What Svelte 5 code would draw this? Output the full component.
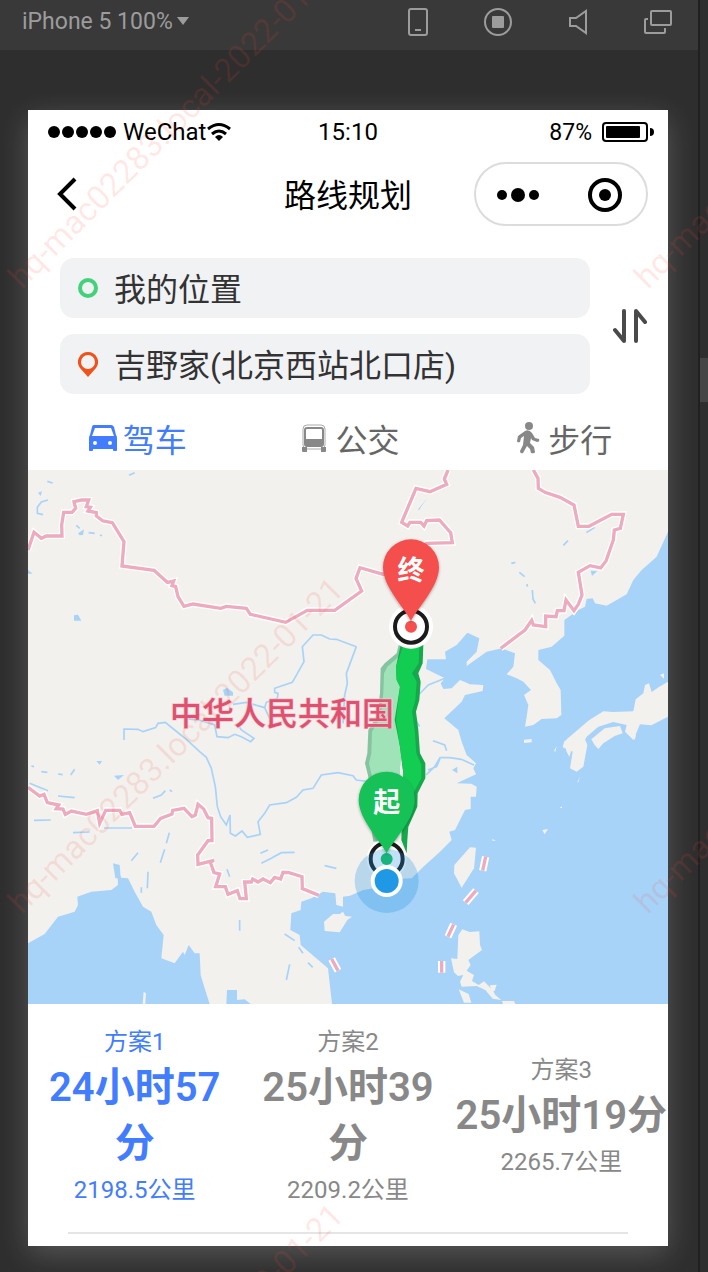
<script lang="ts">
  interface Plan {
    name: string;
    time: string;
    distance: string;
  }

  const plans: Plan[] = [
    { name: "方案1", time: "24小时57\n分", distance: "2198.5公里" },
    { name: "方案2", time: "25小时39\n分", distance: "2209.2公里" },
    { name: "方案3", time: "25小时19分", distance: "2265.7公里" },
  ];

  const modes = [
    { id: "car", label: "驾车" },
    { id: "bus", label: "公交" },
    { id: "walk", label: "步行" },
  ];

  // map units: 1920 x 1602
  const borders = [
    "M0 240 18 187 40 205 55 198 102 198 101 165 107 127 132 127 143 115 138 95 160 90 182 90 175 110 187 112 180 123 205 128 205 138 225 153 253 158 288 215 282 288 378 301 418 337 437 333 432 347 443 350 450 380 468 409 495 402 578 415 595 409 655 415 667 433 773 457 838 421 920 421 1001 363 984 325 996 293 1066 313 1196 220 1273 218 1268 188 1234 150 1196 152 1188 168 1178 157 1146 157 1139 168 1121 157 1164 55 1206 65 1256 43 1249 27 1260 0",
    "M1516 0 1530 25 1531 55 1551 67 1596 82 1638 105 1651 169 1683 169 1751 133 1786 133 1777 175 1759 180 1756 210 1734 273 1718 294 1686 287 1651 307 1662 375 1651 403 1638 422 1614 390 1608 422 1588 422 1584 440 1553 438 1553 470 1516 465 1511 451 1491 480 1418 535",
    "M0 952 35 978 48 973 58 998 92 1005 85 1016 105 1017 112 1033 130 1023 175 1033 208 1022 215 1060 233 1021 275 1021 282 1033 305 1028 322 1069 378 1069 398 1045 432 1032 434 1021 468 1015 492 1040 502 1035 510 1003 527 1017 540 1043 551 1045 552 1112 540 1112 509 1155 510 1183 558 1171 547 1177 558 1208 575 1212 563 1250 592 1250 600 1273 628 1262 636 1286 655 1286 650 1236 670 1236 674 1227 690 1236 705 1227 727 1238 740 1222 758 1227 765 1207 783 1208 822 1220 823 1256 873 1276",
  ];

  const dashes = [
    "M1373 1160 1364 1202",
    "M1344 1262 1313 1298",
    "M1277 1363 1260 1400",
    "M1241 1473V1508",
    "M911 1467 930 1502",
  ];

  const land = [
    "M888 1355 915 1332 935 1332 945 1325 952 1338 972 1340 958 1350 935 1387 890 1383Z",
    "M1326 1132 1344 1133 1338 1195 1301 1253 1278 1210 1279 1185Z",
    "M1291 1395 1303 1378 1325 1386 1354 1384 1356 1425 1362 1440 1321 1470 1328 1485 1316 1502 1338 1515 1332 1533 1352 1545 1368 1534 1394 1560 1402 1575 1420 1590 1394 1586 1372 1560 1346 1548 1301 1550 1296 1535 1306 1515 1290 1518 1278 1507 1269 1465 1288 1467Z",
    "M1292 1558 1322 1572 1330 1598 1308 1598Z",
    "M1422 1593H1458L1462 1602H1425Z",
    "M1386 1546 1406 1544 1400 1562 1390 1566Z",
    "M1920 635 1894 650 1871 666 1863 640 1851 645 1846 670 1823 688 1816 724 1755 726 1726 724 1684 750 1616 808 1606 835 1660 828 1676 800 1711 770 1756 756 1796 765 1791 785 1816 810 1836 763 1870 766 1920 740Z",
    "M1610 812 1666 795 1678 825 1666 890 1646 905 1626 895 1634 845 1604 830Z",
    "M1690 808 1730 775 1776 768 1784 790 1760 798 1726 820 1711 837 1700 825Z",
    "M1806 790 1824 795 1820 810Z",
    "M1488 809 1511 807 1511 817 1488 819Z",
    "M1543 1080 1560 1077 1550 1093Z",
    "M1597 1010H1602V1014H1597Z",
    "M1393 1107 1404 1112H1393Z",
    "M1647 938 1656 920 1652 934Z",
    "M1896 615 1908 610V626Z",
    "M1578 842 1586 828 1582 845Z",
    "M1610 825 1632 835 1624 860 1616 845Z",
    "M344 1602 347 1565 354 1570 352 1602Z",
  ];

  const rivers = [
    "M288 810V777L330 778 345 785 383 773 390 760 412 757 440 780 475 808 515 845 535 862 550 895 562 950 568 1010 578 1040 595 1065 606 1035 607 1090 622 1098 642 1083 658 1102 697 1093 690 1055 710 1030 725 1005 775 998 805 982 825 960 855 955 880 915 930 908 975 917 985 930 1040 937",
    "M1171 675 1201 645 1251 625",
    "M1194 915 1220 890 1236 863 1266 863 1300 868 1338 885M1200 900 1226 890 1236 866",
    "M985 530 955 610 958 640 950 675 945 760",
    "M985 530 925 508 905 507 880 495 855 495 823 530 828 575 793 637 740 655 740 667 750 670 748 685 715 697 710 713 655 697 615 703M710 713 725 745",
    "M470 745 520 752 560 765 567 800 600 803 620 793 640 800 668 815 678 805 640 780 630 765",
    "M303 16 320 8M58 34 74 39M60 90 40 96 28 112 28 130 45 134M145 166 155 175M182 188 200 190M216 195 222 197",
    "M1606 226 1620 212M1675 188 1700 172M1450 280 1462 277M1474 307 1490 320M1497 342 1498 350M1513 360 1515 387 1522 400",
    "M90 978 140 983M18 1051 68 1050M135 1088 185 1086M228 1074 312 1074M375 985 400 975 412 962M425 960 432 965M310 1172 330 1148M397 1178 410 1138M415 1120 424 1088M360 1205 358 1255M340 1252V1268",
    "M700 1180 730 1165 760 1148 800 1147M697 1150 720 1140M890 1187 925 1195M597 1198 605 1220M635 1350V1382M770 1392 800 1412M812 1432 825 1450M840 1478 854 1492M785 1483 775 1530M10 888 18 890M40 905 58 907M90 912 104 914M128 915 140 898M5 940 60 962",
    "M1215 812 1250 825 1256 842M1160 745 1175 770",
  ];
  const lakes = [
    "M138 436 150 434 160 452H138Z",
    "M150 190 168 178 165 195 155 196Z",
    "M1170 118 1198 85 1178 112 1174 120Z",
    "M1688 302 1708 303 1692 318Z",
    "M585 660 597 653 615 667V677H590Z",
    "M258 917 288 915 270 930Z",
    "M205 873 222 873 215 884Z",
    "M1272 900 1288 890V910Z",
    "M0 300 14 311H0Z",
    "M255 1180 275 1185 278 1225 262 1225Z",
    "M30 68 42 64 38 78Z",
  ];

  let from = $state("我的位置");
  let to = $state("吉野家(北京西站北口店)");
  let mode = $state("car");
  let selected = $state(0);

  function swap() {
    [from, to] = [to, from];
  }
</script>

{#snippet pin(x: number, y: number, color: string, label: string)}
  <g transform="translate({x} {y})">
    <path
      d="M0 0C-12-32-84-100-84-162A84 84 0 0 1 84-162C84-100 12-32 0 0Z"
      fill={color}
      filter="url(#pin-shadow)"
    />
    <text class="pin-label" y="-124">{label}</text>
  </g>
{/snippet}

<div class="simulator">
  <div class="workspace">
    <div class="toolbar">
      <button class="device">iPhone 5 100% <span class="caret"></span></button>
      <div class="tools">
        <button aria-label="Device">
          <svg width="28" height="28" viewBox="0 0 28 28"><rect x="5" y="1" width="18" height="26" rx="2" /><path d="M11 22H17" /></svg>
        </button>
        <button aria-label="Stop">
          <svg width="28" height="28" viewBox="0 0 28 28"><circle cx="14" cy="14" r="13" /><rect class="solid" x="8" y="8" width="12" height="12" rx="1" /></svg>
        </button>
        <button aria-label="Sound">
          <svg width="28" height="28" viewBox="0 0 28 28"><path d="M6 10H12L22 3V25L12 18H6Z" /></svg>
        </button>
        <button aria-label="Windows">
          <svg width="28" height="28" viewBox="0 0 28 28"><rect x="7" y="3" width="20" height="14" rx="1" /><path d="M4 11H2Q1 11 1 12V24Q1 25 2 25H20Q21 25 21 24V20" /></svg>
        </button>
      </div>
    </div>

    <main class="phone">
      <div class="status">
        <div class="carrier">
          <svg width="70" height="14" viewBox="0 0 70 14">
            {#each [6, 20, 34, 48, 62] as cx}
              <circle {cx} cy="7" r="6" />
            {/each}
          </svg>
          <span>WeChat</span>
          <svg width="24" height="20" viewBox="0 0 24 20">
            <g fill="none" stroke="#000" stroke-width="3">
              <path d="M1 7Q12-2 23 7" />
              <path d="M5 12Q12 6 19 12" />
            </g>
            <path d="M8 15Q12 11 16 15L12 19Z" />
          </svg>
        </div>
        <div class="clock">15:10</div>
        <div class="battery">
          <span>87%</span>
          <svg width="52" height="20" viewBox="0 0 52 20">
            <rect x="1" y="1" width="44" height="18" rx="3" fill="none" stroke="#000" stroke-width="2" />
            <rect x="4" y="4" width="34" height="12" rx="1" />
            <path d="M48 6Q52 6 52 10T48 14Z" />
          </svg>
        </div>
      </div>

      <header class="navbar">
        <button class="back" aria-label="返回">
          <svg width="22" height="34" viewBox="0 0 22 34"><path d="M19 2 4 17 19 32" fill="none" stroke="#000" stroke-width="4" /></svg>
        </button>
        <h1>路线规划</h1>
        <div class="capsule">
          <button aria-label="更多">
            <svg width="44" height="16" viewBox="0 0 44 16"><circle cx="6" cy="8" r="5" /><circle cx="22" cy="8" r="7" /><circle cx="38" cy="8" r="5" /></svg>
          </button>
          <button aria-label="关闭">
            <svg width="34" height="34" viewBox="0 0 34 34"><circle cx="17" cy="17" r="15" fill="none" stroke="#000" stroke-width="4" /><circle cx="17" cy="17" r="6" /></svg>
          </button>
        </div>
      </header>

      <section class="search">
        <div class="fields">
          <label class="field">
            <svg width="20" height="28" viewBox="0 0 20 28"><circle cx="10" cy="14" r="8" fill="none" stroke="#43d27b" stroke-width="4" /></svg>
            <input type="text" aria-label="起点" bind:value={from} />
          </label>
          <label class="field">
            <svg width="20" height="28" viewBox="0 0 20 28"><path fill="#f1511b" fill-rule="evenodd" d="M10 2A10 10 0 0 1 18 18L10 27 2 18A10 10 0 0 1 10 2ZM10 5A7 7 0 1 0 10 19 7 7 0 1 0 10 5Z" /></svg>
            <input type="text" aria-label="终点" bind:value={to} />
          </label>
        </div>
        <button class="swap" aria-label="交换" onclick={swap}>
          <svg width="34" height="34" viewBox="0 0 34 34"><path d="M11 2V32L2 21M23 32V2L32 13" /></svg>
        </button>
      </section>

      <nav class="modes">
        {#each modes as m (m.id)}
          <button class:active={mode === m.id} onclick={() => (mode = m.id)}>
            <svg width="32" height="32" viewBox="0 0 32 32">
              {#if m.id === "car"}
                <path fill-rule="evenodd" d="M8 3H25Q27 3 28 5L30 13Q31 14 31 16V28Q31 29 30 29H28Q27 29 27 28V27H7V28Q7 29 6 29H4Q3 29 3 28V16Q3 14 4 13L6 5Q6 3 8 3ZM9 6 6 14H28L25 6ZM9 19A2 2 0 1 0 9 23 2 2 0 1 0 9 19ZM24 19A2 2 0 1 0 24 23 2 2 0 1 0 24 19Z" />
              {:else if m.id === "bus"}
                <rect x="5" y="3" width="22" height="24" rx="4" fill="none" stroke="currentColor" stroke-opacity="0.7" />
                <rect x="7" y="6" width="18" height="18" rx="2" fill="none" stroke="currentColor" stroke-width="2" />
                <path d="M8 17H24V24H8ZM4 25H9V30H5Q4 30 4 29ZM23 25H28V29Q28 30 27 30H23Z" />
              {:else}
                <circle cx="18" cy="4" r="4" />
                <path d="M14 9Q18 7 21 11L24 16 28 17Q29 20 26 20L21 18 20 16 19 21 23 25 24 30Q24 32 20 31L19 27 16 24 12 31Q9 32 9 29L12 23 13 14 10 16 9 20Q6 21 6 19L7 14Z" />
              {/if}
            </svg>
            {m.label}
          </button>
        {/each}
      </nav>

      <svg class="map" viewBox="0 0 1920 1602" role="img" aria-label="路线地图">
        <defs>
          <filter id="pin-shadow" x="-20%" y="-20%" width="140%" height="140%">
            <feDropShadow dx="0" dy="3" stdDeviation="5" flood-opacity="0.35" />
          </filter>
        </defs>

        <g class="water">
          <path d="M1920 185 1886 260 1841 300 1816 330 1796 373 1736 407 1701 400 1694 385 1676 387 1671 410 1651 420 1609 450V497L1571 530 1531 540V570L1566 600 1586 640 1598 660 1600 735 1586 745 1541 747 1516 765 1491 770 1496 740 1501 705 1488 675 1509 660 1486 635 1466 625 1436 613 1456 590 1461 550 1421 535 1376 545 1316 588V575L1346 545 1354 505 1318 488 1286 525 1251 545 1254 568H1198L1194 597 1251 625 1238 640 1246 657 1271 655 1296 630 1326 643 1366 645 1364 663 1311 675 1301 695 1249 745 1291 780 1301 815 1316 855 1344 880 1336 895 1344 913 1286 940 1330 941 1346 950 1344 980H1328V1017L1311 1020 1281 1080 1264 1085 1271 1110 1236 1145 1186 1190 1151 1225 1106 1227 1066 1250 1006 1260 966 1277 945 1280V1310L925 1305 922 1270 885 1265 850 1285 820 1295 818 1320 790 1330 787 1380 815 1395 818 1425 900 1495 912 1602H1920Z" />
          <path d="M0 1420 50 1392 90 1340 140 1325 150 1305 148 1280 190 1265 250 1260 270 1245 268 1200 280 1223 300 1225 320 1265 345 1310 370 1325 385 1365 407 1395 400 1465 440 1480 465 1445 470 1455 482 1425 500 1450H515L518 1515 530 1555 545 1602H0Z" />
          <path d="M597 1560H627V1590L650 1588 668 1602H595Z" />
          {#each lakes as d}
            <path {d} />
          {/each}
        </g>
        <g class="land">
          {#each land as d}
            <path {d} />
          {/each}
        </g>
        <g class="rivers">
          {#each rivers as d}
            <path {d} />
          {/each}
        </g>
        {#each borders as d}
          <path class="border-casing" {d} />
        {/each}
        {#each borders as d}
          <path class="border" {d} />
        {/each}
        {#each dashes as d}
          <path class="dash-casing" {d} />
          <path class="dash" {d} />
        {/each}

        <!-- alternative route under the recommended one -->
        <path fill="#86c3a0" d="M1112 525 1106 550 1070 580 1058 595 1056 670 1048 735 1021 780 1018 850 1011 880 1021 920 1026 1050 1036 1115 1100 1110 1130 700 1126 525Z" />
        <path fill="#a0e3b9" d="M1124 525 1112 560 1078 590 1068 610 1066 670 1058 740 1032 785 1030 850 1023 880 1032 920 1038 1060 1052 1115 1100 1110 1130 700 1130 525Z" />
        <path fill="#16a84c" d="M1118 525 1104 590 1106 630 1116 650 1100 750 1116 830 1126 910 1120 1110 1136 1150 1138 1110 1141 1070 1168 1010 1169 970 1192 925V880L1176 850 1171 780 1164 725 1174 690 1178 635 1171 610 1184 580 1186 525Z" />
        <path fill="#13cd53" d="M1126 525 1104 590 1106 630 1116 650 1104 750 1116 830 1126 910 1120 1080 1130 1060 1156 1010 1158 965 1180 925V885L1165 850 1160 780 1152 725 1162 690 1166 635 1152 610 1172 580 1174 525Z" />

        <text class="country" x="762" y="764">中华人民共和国</text>

        <circle cx="1149" cy="470" r="66" fill="#fff" />
        <circle cx="1149" cy="470" r="48" fill="#fff" stroke="#1b1b1b" stroke-width="12" />
        <circle cx="1149" cy="470" r="18" fill="#f4504e" />
        {@render pin(1149, 454, "#f4504e", "终")}

        <circle cx="1076" cy="1167" r="60" fill="#fff" />
        <circle cx="1076" cy="1167" r="48" fill="#fff" stroke="#1b1b1b" stroke-width="12" />
        <circle cx="1076" cy="1167" r="18" fill="#18c158" />
        <circle cx="1076" cy="1233" r="96" fill="#1f91e3" fill-opacity="0.27" />
        {@render pin(1076, 1151, "#18c158", "起")}
        <circle cx="1076" cy="1233" r="48" fill="#fff" />
        <circle cx="1076" cy="1233" r="36" fill="#1f98e6" />
      </svg>

      <section class="plans">
        {#each plans as plan, i}
          <button class="plan" class:active={selected === i} onclick={() => (selected = i)}>
            <span>{plan.name}</span>
            <strong>{plan.time}</strong>
            <span>{plan.distance}</span>
          </button>
        {/each}
      </section>
      <hr />
    </main>
  </div>
  <div class="gutter"><div class="thumb"></div></div>

  <svg class="watermark" aria-hidden="true">
    {#each [[22, 290], [648, 290], [22, 915], [648, 915], [22, 1541]] as [x, y]}
      <text transform="translate({x} {y}) rotate(-45)">hq-mac02283.local-2022-01-21</text>
    {/each}
  </svg>
</div>

<style>
  :global(body) {
    background: #2e2e2e;
  }

  button {
    padding: 0;
    border: 0;
    background: none;
    color: inherit;
    font: inherit;
    cursor: pointer;
  }

  svg {
    display: block;
    flex-shrink: 0;
  }

  .simulator {
    position: relative;
    display: flex;
    overflow: hidden;
    background: #2e2e2e;
    font-family: Roboto, "Noto Sans CJK SC", sans-serif;
  }

  .workspace {
    flex: 1;
    min-width: 0;
  }

  .toolbar {
    display: flex;
    align-items: center;
    justify-content: space-between;
    height: 50px;
    padding: 0 26px 6px 22px;
    box-sizing: border-box;
    background: #393939;
    color: #9c9c9c;
  }

  .device {
    display: flex;
    align-items: center;
    gap: 4px;
    padding-bottom: 2px;
    font-size: 23px;
  }

  .caret {
    border: 6px solid transparent;
    border-top: 8px solid #9c9c9c;
    border-bottom: 0;
  }

  .tools {
    display: flex;
    gap: 52px;
  }

  .tools svg {
    fill: none;
    stroke: #9c9c9c;
    stroke-width: 2;
  }

  .tools .solid {
    fill: #9c9c9c;
    stroke: none;
  }

  .phone {
    margin: 60px 30px 26px 28px;
    background: #fff;
    box-shadow: 0 8px 28px rgba(255, 255, 255, 0.2);
  }

  .status {
    display: grid;
    grid-template-columns: 1fr auto 1fr;
    align-items: center;
    height: 44px;
    padding: 0 14px;
    font-size: 24px;
  }

  .carrier,
  .battery {
    display: flex;
    align-items: center;
  }

  .carrier {
    padding-left: 6px;
  }

  .carrier span {
    margin: 0 1px 0 5px;
  }

  .battery {
    justify-content: flex-end;
    gap: 10px;
    font-size: 23px;
  }

  .navbar {
    display: grid;
    grid-template-columns: 1fr auto 1fr;
    align-items: center;
    height: 80px;
    padding: 0 20px;
  }

  .back {
    justify-self: start;
    margin-left: 8px;
  }

  h1 {
    margin: 0;
    padding-top: 4px;
    font-size: 32px;
    font-weight: 400;
    line-height: 40px;
  }

  .capsule {
    display: flex;
    justify-self: end;
    align-items: center;
    justify-content: space-between;
    width: 174px;
    height: 64px;
    padding: 2px 24px 0 20px;
    box-sizing: border-box;
    border: 2px solid #dcdcdc;
    border-radius: 32px;
  }

  .search {
    display: flex;
    align-items: center;
    gap: 23px;
    padding: 24px 21px 14px 32px;
  }

  .fields {
    display: flex;
    flex: 1;
    flex-direction: column;
    gap: 16px;
    min-width: 0;
  }

  .field {
    display: flex;
    align-items: center;
    gap: 16px;
    height: 60px;
    padding: 0 18px;
    border-radius: 14px;
    background: #f1f2f4;
  }

  .field input {
    flex: 1;
    min-width: 0;
    padding: 0 0 2px;
    border: 0;
    outline: none;
    background: none;
    color: #333;
    font: inherit;
    font-size: 32px;
  }

  .swap svg {
    fill: none;
    stroke: #4a4a4a;
    stroke-width: 4;
    stroke-linecap: round;
    stroke-linejoin: round;
  }

  .modes {
    display: grid;
    grid-template-columns: repeat(3, 1fr);
    height: 62px;
    padding-left: 2px;
  }

  .modes button {
    display: flex;
    align-items: center;
    justify-content: center;
    gap: 5px;
    padding-bottom: 2px;
    color: #666;
    font-size: 32px;
  }

  .modes svg {
    fill: currentColor;
    color: #888;
  }

  .modes .active,
  .modes .active svg {
    color: #427cff;
  }

  .map {
    width: 100%;
    background: #f2f1ed;
  }

  .water {
    fill: #a7d3f8;
  }

  .land {
    fill: #f2f1ed;
  }

  .rivers {
    fill: none;
    stroke: #a7d3f8;
    stroke-width: 5;
  }

  .border,
  .border-casing {
    fill: none;
    stroke: #ecabbf;
    stroke-width: 10;
  }

  .border-casing {
    stroke: #fff;
    stroke-width: 18;
  }

  .dash {
    stroke: #ecabbf;
    stroke-width: 10;
  }

  .dash-casing {
    stroke: #fff;
    stroke-width: 22;
  }

  .country {
    fill: #e0506f;
    stroke: #f5c6d0;
    stroke-width: 4;
    paint-order: stroke;
    font-size: 96px;
    font-weight: 500;
    text-anchor: middle;
  }

  .pin-label {
    fill: #fff;
    font-size: 81px;
    font-weight: 700;
    text-anchor: middle;
  }

  .plans {
    display: grid;
    grid-template-columns: repeat(3, 1fr);
    padding: 20px 0 24px;
  }

  .plan {
    display: flex;
    flex-direction: column;
    align-items: center;
    justify-content: center;
    color: #888;
    font-size: 24px;
    line-height: 36px;
  }

  .plan strong {
    font-size: 40px;
    font-weight: 600;
    line-height: 56px;
    white-space: pre-line;
  }

  .plan.active {
    color: #427cff;
  }

  hr {
    height: 2px;
    margin: 0 40px;
    border: 0;
    background: #e5e5e5;
  }

  .phone::after {
    content: "";
    display: block;
    height: 12px;
  }

  .gutter {
    width: 8px;
    border-left: 2px solid #202020;
    background: #2e2e2e;
  }

  .thumb {
    height: 44px;
    margin-top: 358px;
    background: #454545;
  }

  .watermark {
    position: absolute;
    inset: 0;
    width: 100%;
    height: 100%;
    pointer-events: none;
  }

  .watermark text {
    fill: #ff4632;
    fill-opacity: 0.12;
    font-size: 33px;
  }
</style>
